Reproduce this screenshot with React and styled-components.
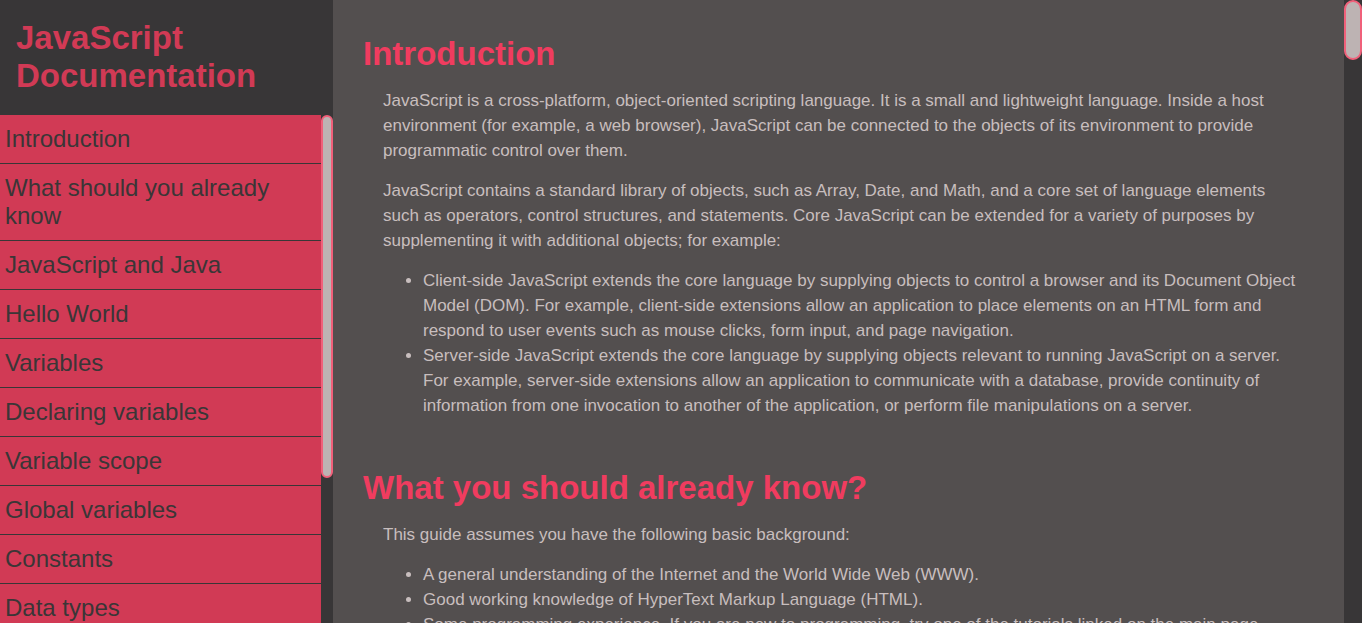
import React from "react";
import styled, { createGlobalStyle } from "styled-components";

const GlobalStyle = createGlobalStyle`
  * {
    box-sizing: border-box;
  }
  html,
  body {
    margin: 0;
    padding: 0;
    height: 100%;
    overflow: hidden;
    font-family: "Liberation Sans", Arial, sans-serif;
  }
  #root {
    height: 100%;
  }
`;

const topics = [
  {
    id: "Introduction",
    title: "Introduction",
    blocks: [
      {
        t: "p",
        text: "JavaScript is a cross-platform, object-oriented scripting language. It is a small and lightweight language. Inside a host\nenvironment (for example, a web browser), JavaScript can be connected to the objects of its environment to provide\nprogrammatic control over them.",
      },
      {
        t: "p",
        text: "JavaScript contains a standard library of objects, such as Array, Date, and Math, and a core set of language elements\nsuch as operators, control structures, and statements. Core JavaScript can be extended for a variety of purposes by\nsupplementing it with additional objects; for example:",
      },
      {
        t: "ul",
        items: [
          "Client-side JavaScript extends the core language by supplying objects to control a browser and its Document Object\nModel (DOM). For example, client-side extensions allow an application to place elements on an HTML form and\nrespond to user events such as mouse clicks, form input, and page navigation.",
          "Server-side JavaScript extends the core language by supplying objects relevant to running JavaScript on a server.\nFor example, server-side extensions allow an application to communicate with a database, provide continuity of\ninformation from one invocation to another of the application, or perform file manipulations on a server.",
        ],
      },
    ],
  },
  {
    id: "What_should_you_already_know",
    nav: "What should you already know",
    title: "What you should already know?",
    blocks: [
      { t: "p", text: "This guide assumes you have the following basic background:" },
      {
        t: "ul",
        items: [
          "A general understanding of the Internet and the World Wide Web (WWW).",
          "Good working knowledge of HyperText Markup Language (HTML).",
          "Some programming experience. If you are new to programming, try one of the tutorials linked on the main page\nabout JavaScript.",
        ],
      },
    ],
  },
  {
    id: "JavaScript_and_Java",
    title: "JavaScript and Java",
    blocks: [
      {
        t: "p",
        text: "JavaScript and Java are similar in some ways but fundamentally different in some others. The JavaScript language resembles Java but does not have Java's static typing and strong type checking. JavaScript follows most Java expression syntax, naming conventions and basic control-flow constructs which was the reason why it was renamed from LiveScript to JavaScript.",
      },
      {
        t: "p",
        text: "In contrast to Java's compile-time system of classes built by declarations, JavaScript supports a runtime system based on a small number of data types representing numeric, Boolean, and string values. JavaScript has a prototype-based object model instead of the more common class-based object model. The prototype-based model provides dynamic inheritance; that is, what is inherited can vary for individual objects. JavaScript also supports functions without any special declarative requirements. Functions can be properties of objects, executing as loosely typed methods.",
      },
      {
        t: "p",
        text: "JavaScript is a very free-form language compared to Java. You do not have to declare all variables, classes, and methods. You do not have to be concerned with whether methods are public, private, or protected, and you do not have to implement interfaces. Variables, parameters, and function return types are not explicitly typed.",
      },
    ],
  },
  {
    id: "Hello_World",
    title: "Hello World",
    blocks: [
      {
        t: "p",
        text: 'To get started with writing JavaScript, open the Scratchpad and write your first "Hello world" JavaScript code:',
      },
      { t: "code", text: 'function greetMe(yourName) { alert("Hello " + yourName); }\ngreetMe("World");' },
      { t: "p", text: "Select the code in the pad and hit Ctrl+R to watch it unfold in your browser!" },
    ],
  },
  {
    id: "Variables",
    title: "Variables",
    blocks: [
      {
        t: "p",
        text: "You use variables as symbolic names for values in your application. The names of variables, called identifiers, conform to certain rules.",
      },
      {
        t: "p",
        text: 'A JavaScript identifier must start with a letter, underscore (_), or dollar sign ($); subsequent characters can also be digits (0-9). Because JavaScript is case sensitive, letters include the characters "A" through "Z" (uppercase) and the characters "a" through "z" (lowercase).',
      },
      {
        t: "p",
        text: "You can use ISO 8859-1 or Unicode letters such as å and ü in identifiers. You can also use the Unicode escape sequences as characters in identifiers. Some examples of legal names are Number_hits, temp99, and _name.",
      },
    ],
  },
  {
    id: "Declaring_variables",
    title: "Declaring variables",
    blocks: [
      { t: "p", text: "You can declare a variable in three ways:" },
      { t: "p", text: "With the keyword var. For example," },
      { t: "code", text: "var x = 42." },
      { t: "p", text: "This syntax can be used to declare both local and global variables." },
      { t: "p", text: "By simply assigning it a value. For example," },
      { t: "code", text: "x = 42." },
      {
        t: "p",
        text: "This always declares a global variable. It generates a strict JavaScript warning. You shouldn't use this variant.",
      },
      { t: "p", text: "With the keyword let. For example," },
      { t: "code", text: "let y = 13." },
      {
        t: "p",
        text: "This syntax can be used to declare a block scope local variable. See Variable scope below.",
      },
    ],
  },
  {
    id: "Variable_scope",
    title: "Variable scope",
    blocks: [
      {
        t: "p",
        text: "When you declare a variable outside of any function, it is called a global variable, because it is available to any other code in the current document. When you declare a variable within a function, it is called a local variable, because it is available only within that function.",
      },
      {
        t: "p",
        text: "JavaScript before ECMAScript 2015 does not have block statement scope; rather, a variable declared within a block is local to the function (or global scope) that the block resides within. For example the following code will log 5, because the scope of x is the function (or global context) within which x is declared, not the block, which in this case is an if statement.",
      },
      { t: "code", text: "if (true) { var x = 5; }\nconsole.log(x); // 5" },
      {
        t: "p",
        text: "This behavior changes, when using the let declaration introduced in ECMAScript 2015.",
      },
      { t: "code", text: "if (true) { let y = 5; }\nconsole.log(y); // ReferenceError: y is not defined" },
    ],
  },
  {
    id: "Global_variables",
    title: "Global variables",
    blocks: [
      {
        t: "p",
        text: "Global variables are in fact properties of the global object. In web pages the global object is window, so you can set and access global variables using the window.variable syntax.",
      },
      {
        t: "p",
        text: "Consequently, you can access global variables declared in one window or frame from another window or frame by specifying the window or frame name. For example, if a variable called phoneNumber is declared in a document, you can refer to this variable from an iframe as parent.phoneNumber.",
      },
    ],
  },
  {
    id: "Constants",
    title: "Constants",
    blocks: [
      {
        t: "p",
        text: "You can create a read-only, named constant with the const keyword. The syntax of a constant identifier is the same as for a variable identifier: it must start with a letter, underscore or dollar sign and can contain alphabetic, numeric, or underscore characters.",
      },
      { t: "code", text: "const PI = 3.14;" },
      {
        t: "p",
        text: "A constant cannot change value through assignment or be re-declared while the script is running. It has to be initialized to a value.",
      },
      {
        t: "p",
        text: "The scope rules for constants are the same as those for let block scope variables. If the const keyword is omitted, the identifier is assumed to represent a variable.",
      },
      {
        t: "p",
        text: "You cannot declare a constant with the same name as a function or variable in the same scope. For example:",
      },
      {
        t: "code",
        text: "// THIS WILL CAUSE AN ERROR\nfunction f() {};\nconst f = 5;\n\n// THIS WILL CAUSE AN ERROR ALSO\nfunction f() {\n  const g = 5;\n  var g;\n\n  //statements\n}",
      },
      {
        t: "p",
        text: "However, object attributes are not protected, so the following statement is executed without problems.",
      },
      { t: "code", text: 'const MY_OBJECT = {"key": "value"};\nMY_OBJECT.key = "otherValue";' },
    ],
  },
  {
    id: "Data_types",
    title: "Data types",
    blocks: [
      { t: "p", text: "The latest ECMAScript standard defines seven data types:" },
      {
        t: "ul",
        items: [
          "Six data types that are primitives:",
          "Boolean. true and false.",
          "null. A special keyword denoting a null value. Because JavaScript is case-sensitive, null is not the same as Null, NULL, or any other variant.",
          "undefined. A top-level property whose value is undefined.",
          "Number. 42 or 3.14159.",
          'String. "Howdy"',
          "Symbol (new in ECMAScript 2015). A data type whose instances are unique and immutable.",
          "and Object",
        ],
      },
      {
        t: "p",
        text: "Although these data types are a relatively small amount, they enable you to perform useful functions with your applications. Objects and functions are the other fundamental elements in the language. You can think of objects as named containers for values, and functions as procedures that your application can perform.",
      },
    ],
  },
  {
    id: "if...else_statement",
    title: "if...else statement",
    blocks: [
      {
        t: "p",
        text: "Use the if statement to execute a statement if a logical condition is true. Use the optional else clause to execute a statement if the condition is false. An if statement looks as follows:",
      },
      { t: "code", text: "if (condition) {\n  statement_1;\n} else {\n  statement_2;\n}" },
      {
        t: "p",
        text: "condition can be any expression that evaluates to true or false. See Boolean for an explanation of what evaluates to true and false. If condition evaluates to true, statement_1 is executed; otherwise, statement_2 is executed. statement_1 and statement_2 can be any statement, including further nested if statements.",
      },
      {
        t: "p",
        text: "You may also compound the statements using else if to have multiple conditions tested in sequence, as follows:",
      },
      {
        t: "code",
        text: "if (condition_1) {\n  statement_1;\n} else if (condition_2) {\n  statement_2;\n} else if (condition_n) {\n  statement_n;\n} else {\n  statement_last;\n}",
      },
      {
        t: "p",
        text: "In the case of multiple conditions only the first logical condition which evaluates to true will be executed. To execute multiple statements, group them within a block statement ({ ... }) . In general, it's good practice to always use block statements, especially when nesting if statements:",
      },
      {
        t: "code",
        text: "if (condition) {\n  statement_1_runs_if_condition_is_true;\n  statement_2_runs_if_condition_is_true;\n} else {\n  statement_3_runs_if_condition_is_false;\n  statement_4_runs_if_condition_is_false;\n}",
      },
      {
        t: "p",
        text: "It is advisable to not use simple assignments in a conditional expression, because the assignment can be confused with equality when glancing over the code. For example, do not use the following code:",
      },
      { t: "code", text: "if (x = y) {\n  /* statements here */\n}" },
      {
        t: "p",
        text: "If you need to use an assignment in a conditional expression, a common practice is to put additional parentheses around the assignment. For example:",
      },
      { t: "code", text: "if ((x = y)) {\n  /* statements here */\n}" },
    ],
  },
  {
    id: "while_statement",
    title: "while statement",
    blocks: [
      {
        t: "p",
        text: "A while statement executes its statements as long as a specified condition evaluates to true. A while statement looks as follows:",
      },
      { t: "code", text: "while (condition)\n  statement" },
      {
        t: "p",
        text: "If the condition becomes false, statement within the loop stops executing and control passes to the statement following the loop.",
      },
      {
        t: "p",
        text: "The condition test occurs before statement in the loop is executed. If the condition returns true, statement is executed and the condition is tested again. If the condition returns false, execution stops and control is passed to the statement following while.",
      },
      { t: "p", text: "To execute multiple statements, use a block statement ({ ... }) to group those statements." },
      { t: "p", text: "Example:" },
      { t: "p", text: "The following while loop iterates as long as n is less than three:" },
      { t: "code", text: "var n = 0;\nvar x = 0;\nwhile (n < 3) {\n  n++;\n  x += n;\n}" },
      {
        t: "p",
        text: "With each iteration, the loop increments n and adds that value to x. Therefore, x and n take on the following values:",
      },
      {
        t: "ul",
        items: [
          "After the first pass: n = 1 and x = 1",
          "After the second pass: n = 2 and x = 3",
          "After the third pass: n = 3 and x = 6",
        ],
      },
      {
        t: "p",
        text: "After completing the third pass, the condition n < 3 is no longer true, so the loop terminates.",
      },
    ],
  },
  {
    id: "Function_declarations",
    title: "Function declarations",
    blocks: [
      {
        t: "p",
        text: "A function definition (also called a function declaration, or function statement) consists of the function keyword, followed by:",
      },
      {
        t: "ul",
        items: [
          "The name of the function.",
          "A list of arguments to the function, enclosed in parentheses and separated by commas.",
          "The JavaScript statements that define the function, enclosed in curly brackets, { }.",
        ],
      },
      { t: "p", text: "For example, the following code defines a simple function named square:" },
      { t: "code", text: "function square(number) {\n  return number * number;\n}" },
      {
        t: "p",
        text: "The function square takes one argument, called number. The function consists of one statement that says to return the argument of the function (that is, number) multiplied by itself. The return statement specifies the value returned by the function.",
      },
      { t: "code", text: "return number * number;" },
      {
        t: "p",
        text: "Primitive parameters (such as a number) are passed to functions by value; the value is passed to the function, but if the function changes the value of the parameter, this change is not reflected globally or in the calling function.",
      },
    ],
  },
  {
    id: "Reference",
    title: "Reference",
    blocks: [{ t: "ul", items: ["All the documentation in this page is taken from MDN"] }],
  },
];

const Block = ({ block }) => {
  if (block.t === "ul") {
    return (
      <List>
        {block.items.map((item) => (
          <li key={item}>{item}</li>
        ))}
      </List>
    );
  }
  if (block.t === "code") {
    return (
      <Code>
        <code>{block.text}</code>
      </Code>
    );
  }
  return <Text>{block.text}</Text>;
};

// headless screenshots hide native scrollbars, so the themed ones are drawn
const Scrollbar = ({ width, thumb }) => (
  <Track $w={width}>
    <Thumb $w={width} $h={thumb} />
  </Track>
);

const App = () => {
  return (
    <Container>
      <GlobalStyle />
      <Sidebar id="navbar">
        <Header>JavaScript Documentation</Header>
        <NavArea>
          <NavList>
            {topics.map((topic) => (
              <NavLink key={topic.id} href={"#" + topic.id}>
                {topic.nav || topic.title}
              </NavLink>
            ))}
          </NavList>
          <Scrollbar width={12} thumb={363} />
        </NavArea>
      </Sidebar>
      <MainArea>
        <Main id="main-doc">
          {topics.map((topic) => (
            <Section key={topic.id} id={topic.id}>
              <Title>{topic.title}</Title>
              {topic.blocks.map((block, i) => (
                <Block key={i} block={block} />
              ))}
            </Section>
          ))}
        </Main>
        <Scrollbar width={18} thumb={60} />
      </MainArea>
    </Container>
  );
};

export default App;

const Container = styled.div`
  display: flex;
  width: 100%;
  height: 100vh;
  background: #534f4f;
`;

const Sidebar = styled.nav`
  width: 333px;
  flex-shrink: 0;
  height: 100%;
  display: flex;
  flex-direction: column;
  background: #383637;
`;

const Header = styled.header`
  padding: 19px 16px 20px;
  font-size: 33px;
  font-weight: 700;
  line-height: 38px;
  color: #d13a55;
`;

const NavArea = styled.div`
  flex: 1;
  min-height: 0;
  display: flex;
`;

const NavList = styled.div`
  flex: 1;
  min-width: 0;
  overflow-y: auto;
  scrollbar-width: none;
  display: flex;
  flex-direction: column;
`;

const NavLink = styled.a`
  display: block;
  flex-shrink: 0;
  padding: 10px 5px;
  font-size: 24px;
  line-height: 28px;
  color: #3a3637;
  background: #d13a55;
  text-decoration: none;
  border-bottom: 1px solid #383637;
`;

const Track = styled.div`
  width: ${(p) => p.$w}px;
  flex-shrink: 0;
  display: flex;
  flex-direction: column;
  background: #383637;
`;

const Thumb = styled.div`
  height: ${(p) => p.$h}px;
  background: #bdb3b3;
  border: 2px solid #f0607a;
  border-radius: ${(p) => p.$w / 2}px;
`;

const MainArea = styled.div`
  flex: 1;
  min-width: 0;
  height: 100%;
  display: flex;
`;

const Main = styled.main`
  flex: 1;
  min-width: 0;
  overflow-y: auto;
  scrollbar-width: none;
  padding: 35px 10px 40px 30px;
  display: flex;
  flex-direction: column;
  gap: 36px;
  color: #c8bebe;
  font-size: 17px;
  line-height: 25px;
`;

const Section = styled.section`
  flex-shrink: 0;
`;

const Title = styled.h2`
  margin: 0;
  font-size: 33px;
  font-weight: 700;
  line-height: 38px;
  color: #f03c5f;
`;

const Text = styled.p`
  margin: 15px 0 15px 20px;
  white-space: pre-line;
`;

const List = styled.ul`
  margin: 15px 0 15px 20px;
  padding-left: 40px;
  white-space: pre-line;
`;

const Code = styled.pre`
  margin: 15px 0 15px 20px;
  padding: 12px 16px;
  background: #3f3c3d;
  border-radius: 4px;
  font-family: "Liberation Mono", monospace;
  font-size: 14px;
  line-height: 20px;
  white-space: pre-wrap;
`;
